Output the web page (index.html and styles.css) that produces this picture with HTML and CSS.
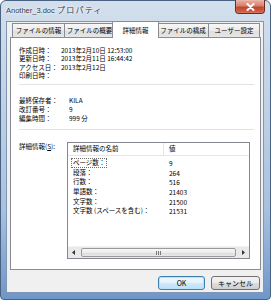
FILE: index.html
```html
<!DOCTYPE html>
<html lang="ja">
<head>
  <meta charset="UTF-8" />
  <title>Another_3.doc プロパティ</title>
  <link rel="stylesheet" href="styles.css">
</head>
<body>
  <div class="window">
    <div class="titlebar">
      <span class="title">Another_3.doc <span class="title-jp">プロパティ</span></span>
      <button class="close" aria-label="閉じる">
        <svg width="9" height="8" viewBox="0 0 9 8"><path d="M1.5 1 L7.5 7 M7.5 1 L1.5 7" stroke="#fff" stroke-width="2" stroke-linecap="round"/></svg>
      </button>
    </div>

    <div class="client">
      <div class="tabs">
        <div class="tab tab-info">ファイルの情報</div>
        <div class="tab tab-summary">ファイルの概要</div>
        <div class="tab tab-detail active">詳細情報</div>
        <div class="tab tab-content">ファイルの構成</div>
        <div class="tab tab-custom">ユーザー設定</div>
      </div>

      <div class="panel">
        <div class="props props-dates">
          <span>作成日時：</span><span>2013年2月10日 12:53:00</span>
          <span>更新日時：</span><span>2013年2月11日 16:44:42</span>
          <span>アクセス日：</span><span>2013年2月12日</span>
          <span>印刷日時：</span><span></span>
        </div>
        <div class="sep"></div>
        <div class="props props-edit">
          <span>最終保存者：</span><span>KILA</span>
          <span>改訂番号：</span><span>9</span>
          <span>編集時間：</span><span>999 分</span>
        </div>
        <div class="sep sep-2"></div>

        <div class="details">
          <label class="details-label">詳細情報(<u>S</u>):</label>
          <div class="listview">
            <div class="lv-header">
              <div class="col-name">詳細情報の名前</div>
              <div class="col-value">値</div>
            </div>
            <div class="lv-rows">
              <div class="lv-row"><div class="col-name"><span class="item focused">ページ数：</span></div><div class="col-value">9</div></div>
              <div class="lv-row"><div class="col-name"><span class="item">段落：</span></div><div class="col-value">264</div></div>
              <div class="lv-row"><div class="col-name"><span class="item">行数：</span></div><div class="col-value">516</div></div>
              <div class="lv-row"><div class="col-name"><span class="item">単語数：</span></div><div class="col-value">21403</div></div>
              <div class="lv-row"><div class="col-name"><span class="item">文字数：</span></div><div class="col-value">21500</div></div>
              <div class="lv-row"><div class="col-name"><span class="item">文字数 (スペースを含む)：</span></div><div class="col-value">21531</div></div>
            </div>
            <div class="hscroll">
              <div class="sb-arrow">
                <svg width="4" height="5" viewBox="0 0 4 5"><path d="M3 0 L0 2.5 L3 5 Z" fill="#333"/></svg>
              </div>
              <div class="sb-thumb"><span class="grip"></span></div>
              <div class="sb-arrow">
                <svg width="4" height="5" viewBox="0 0 4 5"><path d="M1 0 L4 2.5 L1 5 Z" fill="#333"/></svg>
              </div>
            </div>
          </div>
        </div>
      </div>

      <div class="actions">
        <button class="btn btn-ok">OK</button>
        <button class="btn btn-cancel">キャンセル</button>
      </div>
    </div>
  </div>
</body>
</html>
```

FILE: styles.css
```css
* {
  box-sizing: border-box;
  margin: 0;
  padding: 0;
}

body {
  width: 271px;
  height: 300px;
  background: #fff;
  font-family: "Noto Sans CJK JP", "Noto Sans", sans-serif;
  font-size: 6.5px;
  color: #000;
  overflow: hidden;
}

.window {
  width: 271px;
  height: 300px;
  display: flex;
  flex-direction: column;
  padding: 0 6px 6px 5px;
  border: 1px solid #4a6282;
  border-radius: 6px 6px 4px 4px;
  background: linear-gradient(180deg, #d3dfec 0%, #bfd1e5 35%, #a9c1df 70%, #6f96ca 100%);
}

.titlebar {
  height: 20px;
  display: flex;
  align-items: flex-start;
  justify-content: space-between;
}

.title {
  margin-top: 4px;
  font-family: "Liberation Sans", sans-serif;
  font-size: 7.5px;
  line-height: 10px;
  color: #2e3a48;
  text-shadow: 0 0 4px #fff, 0 0 2px #fff;
}

.title-jp {
  font-family: "Noto Sans CJK JP", sans-serif;
  font-size: 8px;
  letter-spacing: 1.3px;
}

.close {
  width: 30px;
  height: 14px;
  margin-top: -1px;
  margin-right: -1px;
  border: 1px solid #6b2a22;
  border-top: none;
  border-radius: 0 0 4px 4px;
  background: linear-gradient(180deg, #eab0a2 0%, #d6826f 45%, #c2452e 55%, #d3664a 100%);
  box-shadow: inset 0 0 1px #fff;
  display: flex;
  align-items: center;
  justify-content: center;
}

.client {
  flex: 1;
  display: flex;
  flex-direction: column;
  padding: 1px 2px 2px 3px;
  background: #f0f0f0;
  border: 1px solid #8196b3;
}

/* tab strip */
.tabs {
  display: flex;
  height: 14px;
  padding-left: 2px;
}

.tab {
  height: 14px;
  line-height: 13px;
  text-align: center;
  white-space: nowrap;
  overflow: hidden;
  border: 1px solid #898c95;
  border-bottom: none;
  margin-left: -1px;
  background: linear-gradient(180deg, #f7f7f7 0%, #ebebeb 50%, #dedede 51%, #e6e6e6 100%);
}

.tab:first-child {
  margin-left: 0;
}

.tab-info { width: 53px; }
.tab-summary { width: 51px; }
.tab-detail { width: 43px; }
.tab-content { width: 52px; }
.tab-custom { width: 52px; }

.tab.active {
  position: relative;
  z-index: 1;
  height: 17px;
  margin-top: -2px;
  margin-left: -3px;
  margin-right: -2px;
  width: 47px;
  line-height: 16px;
  background: #fff;
}

.tab.active + .tab {
  margin-left: 0;
}

/* page */
.panel {
  flex: 1;
  display: flex;
  flex-direction: column;
  background: #fff;
  border: 1px solid #898c95;
  padding: 8px 6px 10px 8px;
}

.props {
  display: grid;
  grid-template-columns: 42px 1fr;
  grid-auto-rows: 8.3px;
  line-height: 8.3px;
  white-space: nowrap;
}

.props-edit {
  grid-template-columns: 50px 1fr;
  grid-auto-rows: 9px;
  line-height: 9px;
  margin-top: 11px;
}

.sep {
  height: 1px;
  margin-top: 5px;
  background: #dfe3e8;
}

.sep-2 {
  margin-top: 6px;
}

.details {
  flex: 1;
  display: flex;
  margin-top: 12px;
}

.details-label {
  width: 48px;
  line-height: 8px;
}

.listview {
  flex: 1;
  margin-right: 4px;
  display: flex;
  flex-direction: column;
  border: 1px solid #828790;
}

.lv-header {
  display: flex;
  height: 13px;
  line-height: 11px;
  border-bottom: 1px solid #e3e6ea;
}

.lv-header .col-name {
  border-right: 1px solid #e3e6ea;
  padding-left: 5px;
}

.col-name {
  width: 96px;
  padding-left: 3px;
  white-space: nowrap;
}

.col-value {
  padding-left: 5px;
}

.lv-rows {
  padding-top: 2px;
}

.lv-row {
  display: flex;
  height: 9.6px;
  line-height: 8px;
}

.item {
  display: inline-block;
  padding: 0 1px;
  border: 1px solid transparent;
  line-height: 7.6px;
}

.item.focused {
  border: 1px dotted #6d6d6d;
}

.lv-row .col-value {
  padding-top: 1px;
}

/* horizontal scrollbar */
.hscroll {
  margin-top: auto;
  height: 12px;
  display: flex;
  background: #e9e9e9;
  border-top: 1px solid #f4f4f4;
}

.sb-arrow {
  width: 12px;
  display: flex;
  align-items: center;
  justify-content: center;
}

.sb-thumb {
  flex: 1;
  margin: 1px 1px;
  border: 1px solid #9a9a9a;
  border-radius: 2px;
  background: linear-gradient(180deg, #f7f7f7 0%, #ececec 50%, #dcdcdc 51%, #e8e8e8 100%);
  display: flex;
  align-items: center;
  justify-content: center;
}

.grip {
  width: 5px;
  height: 4px;
  background: repeating-linear-gradient(90deg, #7a7a7a 0 1px, transparent 1px 2px);
}

/* buttons */
.actions {
  display: flex;
  justify-content: flex-end;
  gap: 6px;
  margin-top: 6px;
  padding-right: 1px;
}

.btn {
  height: 14px;
  font-family: "Noto Sans CJK JP", sans-serif;
  font-size: 7px;
  line-height: 12px;
  color: #000;
  border: 1px solid #707070;
  border-radius: 3px;
  background: linear-gradient(180deg, #f2f2f2 0%, #ebebeb 50%, #dddddd 51%, #cfcfcf 100%);
}

.btn-ok {
  width: 47px;
  border-color: #3c7fb1;
  box-shadow: inset 0 0 0 1px #b6e3fa;
  background: linear-gradient(180deg, #eef8fe 0%, #e2f2fc 50%, #cfe9fb 51%, #bcdff6 100%);
}

.btn-cancel {
  width: 49px;
}
```
